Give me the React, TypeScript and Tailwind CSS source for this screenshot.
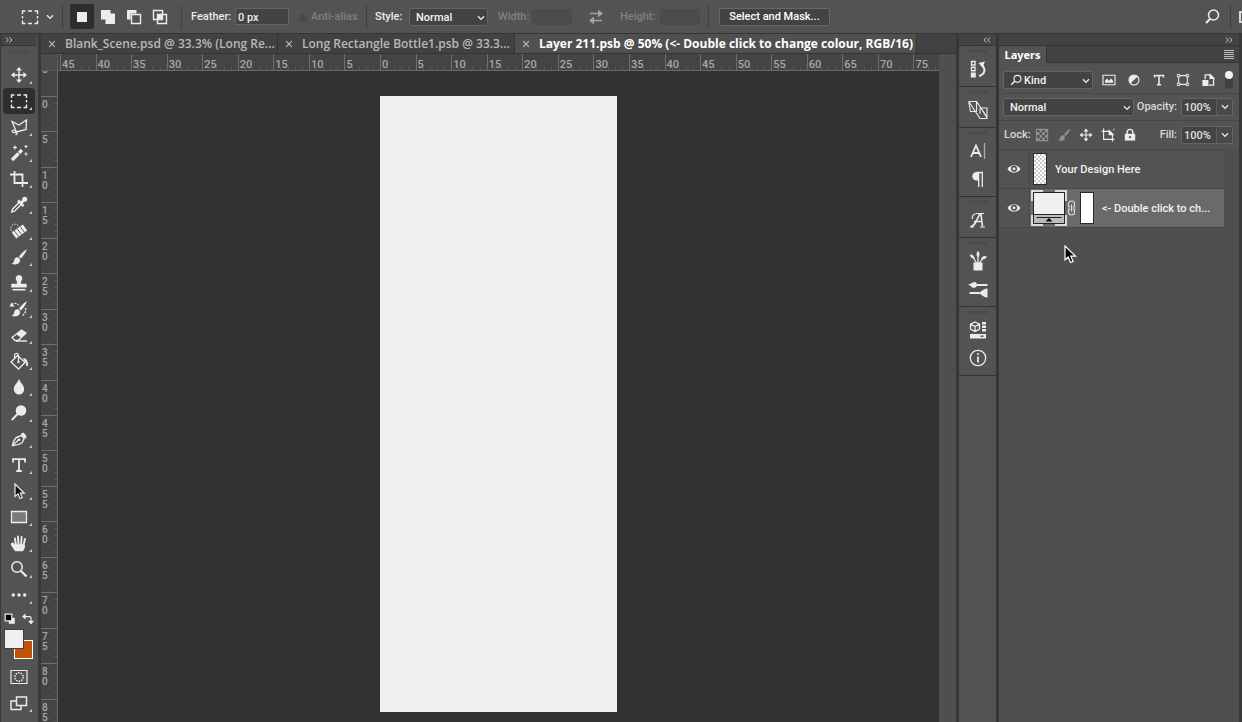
import type { ReactNode } from 'react'
import clsx from 'clsx'

type IconProps = { children: ReactNode; size?: number; className?: string }

/** 20x20 line drawing, stroked in the current text colour */
function Icon({ children, size = 20, className }: IconProps) {
  return (
    <svg
      width={size}
      height={size}
      viewBox="0 0 20 20"
      fill="none"
      stroke="currentColor"
      strokeWidth="1.4"
      className={clsx('shrink-0', className)}
      aria-hidden="true"
    >
      {children}
    </svg>
  )
}

function Chevron({ className }: { className?: string }) {
  return (
    <svg width="8" height="6" viewBox="0 0 8 6" fill="none" stroke="currentColor" strokeWidth="1.3" className={clsx('shrink-0', className)} aria-hidden="true">
      <path d="M1 1.2 4 4.4 7 1.2" />
    </svg>
  )
}

function DoubleChevron({ left }: { left?: boolean }) {
  return (
    <svg width="8" height="6" viewBox="0 0 8 6" fill="none" stroke="#c4c4c4" strokeWidth="1" className={left ? 'rotate-180' : ''} aria-hidden="true">
      <path d="M1 .5 3.4 3 1 5.5M4.6 .5 7 3 4.6 5.5" />
    </svg>
  )
}

function Grip() {
  return <div className="mx-auto h-1 w-5 bg-[repeating-linear-gradient(90deg,#484848_0_1px,#535353_1px_2px)]" />
}

/** small triangle that marks a tool with more tools behind it */
function FlyoutMark() {
  return <span className="absolute right-[3px] bottom-1 size-[3px] bg-[#c8c8c8] [clip-path:polygon(100%_0,100%_100%,0_100%)]" />
}

const movePath = (
  <>
    <path d="M10 4v12M4 10h12" />
    <path d="M10 2l3 3.6H7zM10 18l3-3.6H7zM2 10l3.6-3v6zM18 10l-3.6-3v6z" fill="currentColor" stroke="none" />
  </>
)

const marqueePath = <path d="M2.5 7V4h3M8 4h4M14.5 4h3v3M17.5 9v2.5M17.5 13.5v3h-3M12 16.5H8M5.5 16.5h-3v-3M2.5 11.5V9" />

const brushPath = (
  <>
    <path d="M17.8 2.2c-2 .8-6.3 5-7.8 7.4l1.8 1.8c2.2-1.8 5.6-6.8 6-9.2z" fill="currentColor" stroke="none" />
    <path d="M9.2 10.3c-2-.5-3.7.8-4 3-.2 1.8-1.2 3-2.7 3.4 3 1.6 7.4.8 8.4-2.2.5-1.6-.3-3.5-1.7-4.2z" fill="currentColor" stroke="none" />
  </>
)

const tools: { name: string; icon: ReactNode }[] = [
  { name: 'Move', icon: movePath },
  { name: 'Rectangular Marquee', icon: marqueePath },
  {
    name: 'Polygonal Lasso',
    icon: (
      <>
        <path d="M3 4.5l7 3.5L17.5 3l-.5 9.5-9.5 2.5z" strokeWidth="1.3" />
        <path d="M7.5 15c-1.5-2.3-4.5-2.3-4.5-.7s3.5 1.7 4.5.7zm0 0c1 1 .5 2.5-1 3" strokeWidth="1.2" />
      </>
    ),
  },
  {
    name: 'Magic Wand',
    icon: (
      <>
        <path d="M3 17l6.5-6.5" strokeWidth="3.4" />
        <path d="M10 10l3-3" strokeWidth="3.2" />
        <path d="M6 2.5v4M4 4.5h4M17 2v3M15.5 3.5h3M17 9.5v3M15.5 11h3" strokeWidth="1.2" />
      </>
    ),
  },
  { name: 'Crop', icon: <path d="M1 5.5h12.5V18M5.5 2v12H19" strokeWidth="1.8" /> },
  {
    name: 'Eyedropper',
    icon: (
      <>
        <path d="M10.5 7l-7 7.2-.8 2.8 2.8-.8L12.7 9" strokeWidth="1.4" />
        <path d="M9 5.5l5.5 5.5M11.5 8.5L15 5" strokeWidth="2.6" />
        <circle cx="15.7" cy="4.3" r="2.5" fill="currentColor" stroke="none" />
      </>
    ),
  },
  {
    name: 'Healing Brush',
    icon: (
      <>
        <circle cx="6" cy="7.5" r="4.3" strokeDasharray="1.5 1.2" strokeWidth="1" />
        <path d="M5 14.5L16 6.5" strokeWidth="7.2" />
        <path d="M5.5 10l4 5.5M8.5 8l4 5.5M11.5 6l4 5.5" stroke="#535353" strokeWidth=".9" />
      </>
    ),
  },
  { name: 'Brush', icon: brushPath },
  {
    name: 'Clone Stamp',
    icon: (
      <>
        <path d="M10 2a3.3 3.3 0 0 1 3 4.7c-.8 1.5-1.3 2.7-1 4h4.5c.8 0 1.3.5 1.3 1.3v2.5H2.2V12c0-.8.5-1.3 1.3-1.3H8c.3-1.3-.2-2.5-1-4A3.3 3.3 0 0 1 10 2z" fill="currentColor" stroke="none" />
        <path d="M3.5 16.7h13" strokeWidth="1.6" />
      </>
    ),
  },
  {
    name: 'History Brush',
    icon: (
      <>
        {brushPath}
        <path d="M2.5 5.5c2.5-1.7 5-1.5 7 .5M16.5 9c.7 3-.3 5.5-3 7.3" strokeDasharray="2 1.2" />
        <path d="M.5 7.5L2.5 3.5l3 4z" fill="currentColor" stroke="none" />
      </>
    ),
  },
  {
    name: 'Eraser',
    icon: (
      <>
        <path d="M3 12.5L12.5 5l4.5 3L9 15.5H6z" strokeWidth="1.3" />
        <path d="M7.5 9.5L12.5 5 17 8l-4.7 4.7z" fill="currentColor" stroke="none" />
        <path d="M7 16h11" />
      </>
    ),
  },
  {
    name: 'Paint Bucket',
    icon: (
      <>
        <path d="M8.5 4.5L16 11.5 9.5 18 2 11z" strokeWidth="1.3" />
        <path d="M9.5 11V4.5c0-3-4-3-4 0v3" strokeWidth="1.2" />
        <circle cx="9.5" cy="11" r="1.2" fill="currentColor" stroke="none" />
        <path d="M14 7c3 .3 5.3 2 5 8-1.5.5-2.3-.5-2-2 .2-1.5-.5-2.5-2-3.5z" fill="currentColor" stroke="none" />
      </>
    ),
  },
  { name: 'Blur', icon: <path d="M10 2c1.5 3.7 5.2 6.5 5.2 10.2a5.2 5.2 0 0 1-10.4 0C4.8 8.5 8.5 5.7 10 2z" fill="currentColor" stroke="none" /> },
  {
    name: 'Dodge',
    icon: (
      <>
        <circle cx="12" cy="7.5" r="5.3" fill="currentColor" stroke="none" />
        <path d="M9 10.5L2.8 17" strokeWidth="1.9" />
      </>
    ),
  },
  {
    name: 'Pen',
    icon: (
      <>
        <path d="M3.5 16.5c1-4.5 2-7.5 5-8.5l4-1.5 2.5 3-1.5 3.5c-1.5 2.5-5.5 3-10 3.5z" strokeWidth="1.4" />
        <path d="M3.5 16.5l6-5.5" strokeWidth="1.1" />
        <circle cx="10" cy="10.7" r="1.3" fill="currentColor" stroke="none" />
        <path d="M11.5 5l3-1.5 3 3.5-1 3z" fill="currentColor" stroke="none" />
      </>
    ),
  },
  { name: 'Type', icon: <path d="M4 7.5V4.2h12v3.3M10 4.5V16M7.3 16h5.4" strokeWidth="1.8" /> },
  { name: 'Path Selection', icon: <path d="M6 3v12.5l3-2.6 2 4.6 2.3-1-2-4.3h4z" fill="#111" strokeWidth="1.2" /> },
  { name: 'Rectangle', icon: <path d="M2.5 4.5h15v11h-15z" fill="#7b7b7b" strokeWidth="1.3" /> },
  {
    name: 'Hand',
    icon: (
      <>
        <path d="M6.5 17.5c-1.5-2.5-3.5-4.5-4-6-.2-1.3 1.3-1.6 2-.7L6.5 13h8.7c0 2-.8 3.5-1.7 4.5z" fill="currentColor" />
        <path d="M7 13L6 5.5M9.5 12.5L9 3.5M12 12.5l.6-8.5M14.3 13l1.7-7" strokeWidth="1.9" strokeLinecap="round" />
        <path d="M6.3 12h8.5v2H6.3z" fill="currentColor" />
      </>
    ),
  },
  {
    name: 'Zoom',
    icon: (
      <>
        <circle cx="8" cy="8" r="5.2" strokeWidth="1.5" />
        <path d="M12 12l5.5 5.5" strokeWidth="2.3" />
      </>
    ),
  },
  {
    name: 'Edit Toolbar',
    icon: (
      <g fill="currentColor" stroke="none">
        <circle cx="4.3" cy="10" r="1.7" />
        <circle cx="10" cy="10" r="1.7" />
        <circle cx="15.7" cy="10" r="1.7" />
      </g>
    ),
  },
]

const combineModes = [
  { name: 'New selection', icon: <path d="M5 5h10v10H5z" fill="currentColor" stroke="none" /> },
  { name: 'Add to selection', icon: <path d="M3 3h9.5v3.5H17V17H7.5v-4.5H3z" fill="currentColor" stroke="none" /> },
  {
    name: 'Subtract from selection',
    icon: (
      <>
        <path d="M3 3h9.5v3.5h-6v6H3z" fill="currentColor" stroke="none" />
        <path d="M7.5 7.5h9v9h-9z" />
      </>
    ),
  },
  {
    name: 'Intersect with selection',
    icon: (
      <>
        <path d="M3.5 3.5h9v9h-9zM7.5 7.5h9v9h-9z" />
        <path d="M8 8h4v4H8z" fill="currentColor" stroke="none" />
      </>
    ),
  },
]

const tabs = [
  { title: 'Blank_Scene.psd @ 33.3% (Long Re...' },
  { title: 'Long Rectangle Bottle1.psb @ 33.3...' },
  { title: 'Layer 211.psb @ 50% (<- Double click to change colour, RGB/16)', active: true },
]

const dockGroups: { name: string; icon: ReactNode }[][] = [
  [
    {
      name: 'History',
      icon: (
        <>
          <path d="M3.5 2.5H7V6H3.5zM3.5 8.3H7v3.5H3.5z" />
          <path d="M2.8 13.5h5v5h-5z" fill="currentColor" stroke="none" />
          <path d="M11 17c6-2 7-6.5 3-11" strokeWidth="2" />
          <path d="M10.5 4l6.5-1.5-2.5 6z" fill="currentColor" stroke="none" />
        </>
      ),
    },
  ],
  [
    {
      name: 'Timeline',
      icon: (
        <path d="M.7 1.5h7.8v10H2.5L.7 1.5 12 18.5h7V17L8.5 1.5M12 8h7v10.5M12 8v6M13.5 9l5 8" strokeWidth="1.1" />
      ),
    },
  ],
  [
    {
      name: 'Character',
      icon: (
        <>
          <path d="M3 16L8 4.5 13 16M5 12h6" strokeWidth="1.8" />
          <path d="M16.5 2v16" stroke="#aaa" />
        </>
      ),
    },
    {
      name: 'Paragraph',
      icon: (
        <>
          <path d="M11 3H8.5a4.2 4.2 0 0 0 0 8.5H11z" fill="currentColor" stroke="none" />
          <path d="M10.7 3v15M14.3 3.5V18M8 3.5h7" strokeWidth="1.3" />
        </>
      ),
    },
  ],
  [
    {
      name: 'Glyphs',
      icon: (
        <>
          <path d="M2.5 16.5c4 .5 6-6 9-12H13l1.5 12M6 11.5h8" strokeWidth="1.6" />
          <path d="M4.5 9C3.5 6 6 3.5 9 3.5h7M2 17h4M12 17h5" strokeWidth="1.2" />
        </>
      ),
    },
  ],
  [
    {
      name: 'Brush Presets',
      icon: (
        <>
          <path d="M5.5 11.5h9v8h-9z" fill="currentColor" stroke="none" />
          <path d="M8.5 12L5 6M10 12V4M11.5 12L15 7" strokeWidth="1.3" />
          <path d="M2 3.5c2-.3 4 1 4.8 4C4 8 2.3 6.5 2 3.5zM10 0c2 2 2 4.5 0 6-2-1.5-2-4 0-6zM19 5.5c-1.5 2.7-3.5 3.5-6 2.7 1-3 3.5-4 6-2.7z" fill="currentColor" stroke="none" />
        </>
      ),
    },
    {
      name: 'Brush Settings',
      icon: (
        <>
          <path d="M9 6h10.5M1.5 14h10" strokeWidth="1.9" />
          <path d="M0 5.5C3 5.5 4 3 6.5 3 8.5 3 9 4.5 9 6S8 8.8 6 8.8C3.5 8.8 3 6.5 0 5.5zM11 13.5c2.5-.5 4-4 8.5-4v9c-4.5 0-6-3.5-8.5-4z" fill="currentColor" stroke="none" />
        </>
      ),
    },
  ],
  [
    {
      name: 'Libraries',
      icon: (
        <>
          <path d="M7 2l4.5 2.2v5L7 11.5 2.5 9.2v-5zM2.5 4.2L7 6.5l4.5-2.3M7 6.5v5" strokeWidth="1.3" />
          <path d="M14 2h4v2.5h-4zM14 5.5h4V8h-4zM14 9h4v2.5h-4zM2 14h16v4.5H2z" fill="currentColor" stroke="none" />
          <path d="M12.5 16.2h3" stroke="#535353" />
        </>
      ),
    },
    {
      name: 'Info',
      icon: (
        <>
          <circle cx="10" cy="10" r="7.7" strokeWidth="1.3" />
          <path d="M10 8.5v6M10 5.3v1.8" strokeWidth="1.7" />
        </>
      ),
    },
  ],
]

const layerFilters = [
  {
    name: 'Pixel layers',
    icon: (
      <>
        <path d="M2.5 4h15v12h-15z" />
        <path d="M5 13.5V11l2.5-3L10 11l2.5-3L15 11v2.5z" fill="currentColor" stroke="none" />
      </>
    ),
  },
  {
    name: 'Adjustment layers',
    icon: (
      <>
        <circle cx="10" cy="10" r="6.2" />
        <path d="M5.5 14.5A6.2 6.2 0 0 1 14.5 5.5z" fill="currentColor" stroke="none" />
      </>
    ),
  },
  { name: 'Type layers', icon: <path d="M4.5 7V4.3h11V7M10 4.5V16M7.5 16h5" strokeWidth="2" /> },
  {
    name: 'Shape layers',
    icon: (
      <>
        <path d="M4.5 4.5h11v11h-11z" />
        <path d="M3 3h3v3H3zM14 3h3v3h-3zM3 14h3v3H3zM14 14h3v3h-3z" fill="#535353" strokeWidth="1.2" />
      </>
    ),
  },
  {
    name: 'Smart objects',
    icon: (
      <>
        <path d="M6.5 9V3.5H13l4 4v9h-6" strokeWidth="1.6" />
        <path d="M12.5 3.5V8H17z" fill="currentColor" />
        <path d="M3 10h7.5v7.5H3z" fill="currentColor" stroke="none" />
      </>
    ),
  },
]

const locks = [
  {
    name: 'Lock transparent pixels',
    muted: true,
    icon: (
      <>
        <path d="M3 3h14v14H3z" />
        <path d="M7 3h3v3.5H7zM13.5 3H17v3.5h-3.5zM3 6.5h4V10H3zM10 6.5h3.5V10H10zM7 10h3v3.5H7zM13.5 10H17v3.5h-3.5zM3 13.5h4V17H3zM10 13.5h3.5V17H10z" fill="currentColor" stroke="none" />
      </>
    ),
  },
  { name: 'Lock image pixels', muted: true, icon: brushPath },
  { name: 'Lock position', icon: movePath },
  {
    name: 'Prevent auto-nesting',
    icon: (
      <>
        <path d="M4.5 2v13.5H18M2 5.5h10L15.5 9v9" strokeWidth="1.4" />
        <path d="M11.5 4.5v5h5z" fill="currentColor" />
        <path d="M16.5 4l2-2" strokeDasharray="1.5 1" />
      </>
    ),
  },
  {
    name: 'Lock all',
    icon: (
      <>
        <path d="M3.5 8.5h13V17h-13z" fill="currentColor" stroke="none" />
        <path d="M6.5 9V6.5a3.5 3.5 0 0 1 7 0V9" strokeWidth="1.8" />
        <circle cx="10" cy="12.7" r="1.4" fill="#535353" stroke="none" />
      </>
    ),
  },
]

const horizontalMarks = [45, 40, 35, 30, 25, 20, 15, 10, 5, 0, 5, 10, 15, 20, 25, 30, 35, 40, 45, 50, 55, 60, 65, 70, 75]
const verticalMarks = Array.from({ length: 18 }, (_, i) => i * 5)

function Divider() {
  return <div className="h-6 w-px shrink-0 bg-[#414141]" />
}

type SelectProps = { label: string; value: string; className?: string; padding?: string; children?: ReactNode }

function Select({ label, value, className, padding = 'pl-1.5', children }: SelectProps) {
  return (
    <div className={clsx('relative h-[18px] shrink-0 rounded-xs border border-[#646464] bg-[#434343]', className)}>
      <select aria-label={label} className={clsx('block h-4 w-full appearance-none pt-px pr-4 leading-4 text-[#f2f2f2] outline-none', padding)}>
        <option>{value}</option>
      </select>
      {children}
      <Chevron className="pointer-events-none absolute top-1.5 right-0.5" />
    </div>
  )
}

function PercentField({ id, label }: { id: string; label: string }) {
  return (
    <div className="flex items-center gap-1">
      <label htmlFor={id} className="pt-px text-[#d8d8d8]">{label}</label>
      <div className="flex h-[18px] w-13 rounded-xs border border-[#646464] bg-[#434343]">
        <input id={id} defaultValue="100%" className="min-w-0 flex-1 pt-px pl-0.5 leading-4 text-[#e0e0e0] outline-none" />
        <button aria-label={`${label} slider`} className="flex w-4 items-center justify-center border-l border-[#5c5c5c] bg-[#4a4a4a]">
          <Chevron />
        </button>
      </div>
    </div>
  )
}

function OptionsBar() {
  return (
    <header className="flex h-[34px] shrink-0 items-center border-b border-[#343434] pl-5">
      <button aria-label="Tool preset" className="flex w-[42px] items-center gap-1.5">
        <Icon>{marqueePath}</Icon>
        <Chevron />
      </button>
      <Divider />
      <div className="flex gap-0.5 pr-[9px] pl-[7px]">
        {combineModes.map((m, i) => (
          <button key={m.name} aria-label={m.name} className={clsx('flex h-[25px] w-6 items-center justify-center rounded-xs', i === 0 && 'bg-[#2e2e2e]')}>
            <Icon>{m.icon}</Icon>
          </button>
        ))}
      </div>
      <Divider />
      <label htmlFor="feather" className="ml-[9px] w-11 pt-0.5 whitespace-nowrap">Feather:</label>
      <input id="feather" defaultValue="0 px" className="h-[17px] w-[54px] border border-[#646464] bg-[#434343] pt-px pl-0.5 outline-none" />
      <label className="ml-2.5 flex w-[67px] items-center gap-1 pt-0.5 whitespace-nowrap text-[#808080]">
        <input type="checkbox" disabled className="size-2 appearance-none rounded-full bg-[#4a4a4a]" />
        Anti-alias
      </label>
      <Divider />
      <span className="w-[42px] pt-0.5 pl-2">Style:</span>
      <Select label="Style" value="Normal" className="w-[79px]" />
      <label htmlFor="width" className="ml-2.5 w-[34px] pt-0.5 text-[#808080]">Width:</label>
      <input id="width" disabled className="h-4 w-10 bg-[#4b4b4b]" />
      <button aria-label="Swap width and height" disabled className="mx-3.5 text-[#a0a0a0]">
        <Icon>
          <path d="M4 6.5h9M7 13.5h9" strokeWidth="1.5" />
          <path d="M12 2.5l5 4-5 4zM8 9.5l-5 4 5 4z" fill="currentColor" stroke="none" />
        </Icon>
      </button>
      <label htmlFor="height" className="w-10 pt-0.5 text-[#808080]">Height:</label>
      <input id="height" disabled className="mr-2 h-4 w-10 bg-[#4b4b4b]" />
      <Divider />
      <button className="ml-2.5 h-[18px] w-[111px] shrink-0 rounded-xs border border-[#686868] bg-[#434343] leading-4 whitespace-nowrap text-white">
        Select and Mask...
      </button>
      <div className="ml-auto flex items-center">
        <button aria-label="Search" className="mr-2">
          <Icon>
            <circle cx="11.5" cy="8" r="5" strokeWidth="1.5" />
            <path d="M8 12L4 16" strokeWidth="2" />
          </Icon>
        </button>
        <Divider />
        <button aria-label="Workspace" className="ml-2 h-3 w-[3px] border-2 border-r-0 border-[#d8d8d8]" />
      </div>
    </header>
  )
}

function Toolbar() {
  return (
    <nav aria-label="Tools" className="flex w-[41px] shrink-0 flex-col border-r-3 border-l border-[#383838] pr-px">
      <div className="flex h-3 shrink-0 items-center border-b border-[#343434] bg-[#434343] pl-1">
        <DoubleChevron />
      </div>
      <div className="h-4 shrink-0 pt-1"><Grip /></div>
      {tools.map(tool => (
        <button
          key={tool.name}
          aria-label={tool.name}
          className={clsx('relative mx-0.5 flex h-[26px] shrink-0 items-center justify-center rounded-sm', tool.name === 'Rectangular Marquee' && 'bg-[#2e2e2e]')}
        >
          <Icon>{tool.icon}</Icon>
          <FlyoutMark />
        </button>
      ))}
      <div className="flex h-[21px] shrink-0 items-center gap-1.5 pl-[3px]">
        <button aria-label="Default colours">
          <Icon size={12}>
            <path d="M8 8h10v10H8z" fill="currentColor" stroke="none" />
            <path d="M2 2h11v11H2z" fill="#000" strokeWidth="2" />
          </Icon>
        </button>
        <button aria-label="Switch colours">
          <Icon size={12}>
            <path d="M5 6h8c1.5 0 2 .5 2 2v6" strokeWidth="2" />
            <path d="M6 1v10L0 6zM10 13h10l-5 6z" fill="currentColor" stroke="none" />
          </Icon>
        </button>
      </div>
      {/* foreground swatch overlaps the background one */}
      <div className="relative ml-[3px] h-[30px] w-[29px] shrink-0">
        <button aria-label="Background colour" className="absolute right-0 bottom-0 size-[19px] border border-white bg-[#bf5206]" />
        <button aria-label="Foreground colour" className="absolute top-0 left-0 size-5 border border-[#404040] bg-[#f0f0f0]" />
      </div>
      <button aria-label="Quick mask" className="mt-[5px] flex h-[26px] shrink-0 items-center justify-center">
        <Icon>
          <path d="M2 3.5h16v13H2z" strokeWidth="1.2" />
          <circle cx="10" cy="10" r="4.2" strokeDasharray="1.6 1" />
        </Icon>
      </button>
      <button aria-label="Screen mode" className="relative mx-0.5 flex h-[26px] shrink-0 items-center justify-center">
        <Icon>
          <path d="M2 8h10v8.5H2z" strokeWidth="1.5" />
          <path d="M7.5 4h10v8.5h-10z" fill="#535353" strokeWidth="1.5" />
        </Icon>
        <FlyoutMark />
      </button>
    </nav>
  )
}

function DocumentTabs() {
  return (
    <div className="flex h-5 shrink-0 border-b border-[#343434] bg-[#424242] font-['Open_Sans',sans-serif] text-[12px]">
      {tabs.map(tab => (
        <div
          key={tab.title}
          className={clsx(
            'flex shrink-0 items-center border-r border-[#343434] pl-[7px] whitespace-nowrap',
            tab.active ? 'w-[402px] bg-[#505050] font-bold text-white' : 'w-[237px] font-semibold text-[#b8b8b8]'
          )}
        >
          <button aria-label={`Close ${tab.title}`} className="mr-[9px] text-[#c0c0c0]">
            <svg width="8" height="8" viewBox="0 0 8 8" stroke="currentColor" strokeWidth="1.1" aria-hidden="true">
              <path d="M1.2 1.2l5.6 5.6M6.8 1.2L1.2 6.8" />
            </svg>
          </button>
          <button>{tab.title}</button>
        </div>
      ))}
    </div>
  )
}

function HorizontalRuler() {
  return (
    <div className="flex h-[17px] shrink-0 overflow-hidden bg-[#444] text-[#a8a8a8]">
      <div className="w-[17px] shrink-0 border-r border-b border-dotted border-[#6a6a6a] bg-[#4c4c4c]" />
      <div className="min-w-0 flex-1 overflow-hidden border-b border-[#6a6a6a] pl-0.5">
        <div className="grid h-4 w-[889px] grid-cols-[repeat(25,minmax(0,1fr))]">
          {horizontalMarks.map((mark, i) => (
            <div key={i} className="relative h-4 border-l border-[#6e6e6e] pl-px leading-[22px]">
              {mark}
              <div className="absolute inset-x-0 bottom-0 flex h-[3px] justify-evenly">
                {[1, 2, 3, 4].map(n => <i key={n} className="w-px bg-[#585858]" />)}
              </div>
            </div>
          ))}
        </div>
      </div>
      <div className="w-[17px] shrink-0 bg-[#4f4f4f]" />
    </div>
  )
}

function VerticalRuler() {
  return (
    <div className="w-[17px] shrink-0 overflow-hidden border-r border-[#6a6a6a] bg-[#444] text-[10px] leading-[10px] text-[#a8a8a8]">
      {/* the mark above zero is scrolled almost out of view */}
      <div className="flex h-[25px] items-start pl-px">
        <span className="-mt-1.5">5</span>
      </div>
      <div className="grid h-[638px] grid-rows-[repeat(18,minmax(0,1fr))]">
        {verticalMarks.map(mark => (
          <div key={mark} className="relative flex flex-col border-t border-[#6e6e6e] pt-[3px] pl-px">
            {String(mark).split('').map((digit, i) => <span key={i}>{digit}</span>)}
            <div className="absolute inset-y-0 right-0 flex w-[3px] flex-col justify-evenly">
              {[1, 2, 3, 4].map(n => <i key={n} className="h-px bg-[#585858]" />)}
            </div>
          </div>
        ))}
      </div>
    </div>
  )
}

function Dock() {
  return (
    <aside aria-label="Collapsed panels" className="w-10 shrink-0 border-r-2 border-l border-[#343434]">
      <div className="flex h-3 items-center justify-center border-b border-[#343434] bg-[#434343] pl-[18px]">
        <DoubleChevron left />
      </div>
      {dockGroups.map((group, i) => (
        <div key={i} className="flex flex-col border-b border-[#343434] pb-[3px]">
          <div className="h-[9px] pt-[3px]"><Grip /></div>
          {group.map(item => (
            <button key={item.name} aria-label={item.name} className="flex h-7 items-center justify-center pl-px">
              <Icon>{item.icon}</Icon>
            </button>
          ))}
        </div>
      ))}
    </aside>
  )
}

function Eye() {
  return (
    <svg width="14" height="10" viewBox="0 0 14 10" aria-hidden="true">
      <path d="M.5 5C3.5 0 10.5 0 13.5 5 10.5 10 3.5 10 .5 5z" fill="#e8e8e8" />
      <circle cx="7" cy="4.8" r="3" fill="#4a4a4a" />
      <circle cx="7" cy="4.8" r="1.5" fill="#e8e8e8" />
    </svg>
  )
}

function LayersPanel() {
  return (
    <aside aria-label="Layers panel" className="relative flex w-[244px] shrink-0 flex-col border-r-3 border-l border-[#383838] bg-[#4f4f4f]">
      <div className="flex h-3 shrink-0 items-center justify-end border-b border-[#343434] bg-[#434343] pr-1.5">
        <DoubleChevron />
      </div>
      <div className="flex h-[17px] shrink-0 bg-[#434343]">
        <button className="w-12 border-r border-[#343434] bg-[#535353] font-['Noto_Sans',sans-serif] leading-4 font-bold text-white">Layers</button>
        <div className="flex flex-1 items-center justify-end border-b border-[#343434] pr-[5px]">
          <button aria-label="Panel menu" className="h-[9px] w-2.5 bg-[repeating-linear-gradient(180deg,#bdbdbd_0_1px,#434343_1px_2px)]" />
        </div>
      </div>
      <div className="flex h-[31px] shrink-0 items-center border-b border-[#474747] bg-[#535353] pt-1 pl-1">
        <Select label="Filter by" value="Kind" className="w-[90px]" padding="pl-5">
          <Icon size={12} className="pointer-events-none absolute top-0.5 left-1.5">
            <circle cx="12.5" cy="8" r="5.8" strokeWidth="2" />
            <path d="M8 12l-6 6" strokeWidth="2.6" />
          </Icon>
        </Select>
        <div className="flex flex-1 items-center justify-between pr-1.5 pl-2">
          {layerFilters.map(f => (
            <button key={f.name} aria-label={f.name}><Icon size={16}>{f.icon}</Icon></button>
          ))}
          <button aria-label="Toggle filtering" className="flex h-[18px] w-2 items-start rounded-full bg-[#404040]">
            <span className="size-2 rounded-full bg-[#f2f2f2]" />
          </button>
        </div>
      </div>
      <div className="flex h-[27px] shrink-0 items-center justify-between border-b border-[#474747] bg-[#535353] pr-1.5 pl-1">
        <Select label="Blend mode" value="Normal" className="w-[131px]" />
        <PercentField id="opacity" label="Opacity:" />
      </div>
      <div className="flex h-7 shrink-0 items-center bg-[#535353] pr-1.5 pl-[5px]">
        <span className="w-[30px] pt-px text-[#d8d8d8]">Lock:</span>
        <div className="flex gap-1.5">
          {locks.map(lock => (
            <button key={lock.name} aria-label={lock.name} className={clsx(lock.muted && 'text-[#8f8f8f]')}>
              <Icon size={16}>{lock.icon}</Icon>
            </button>
          ))}
        </div>
        <div className="ml-auto"><PercentField id="fill" label="Fill:" /></div>
      </div>
      <ul className="mr-[15px] border-t border-[#484848] text-[#f2f2f2]">
        <li className="flex h-[39px] items-center border-b border-[#484848] bg-[#535353]">
          <button aria-label="Toggle visibility of Your Design Here" className="flex h-full w-[31px] items-center justify-center border-r border-[#484848]"><Eye /></button>
          <div className="ml-[3px] h-8 w-[14px] border border-[#2a2a2a] bg-[conic-gradient(#c8c8c8_25%,#fff_0_50%,#c8c8c8_0_75%,#fff_0)] bg-[length:4px_4px]" />
          <span className="ml-2 pt-[3px]">Your Design Here</span>
        </li>
        <li className="flex h-[39px] items-center border-b border-[#484848] bg-[#6a6a6a]">
          <button aria-label="Toggle visibility of colour fill" className="flex h-full w-[31px] items-center justify-center border-r border-[#484848] bg-[#535353]"><Eye /></button>
          <svg width="36" height="36" viewBox="0 0 36 36" className="ml-px shrink-0" aria-hidden="true">
            <path d="M1 11V1h11M24 1h11v10M35 25v10H24M12 35H1V25" fill="none" stroke="#fff" strokeWidth="1.5" />
            <path d="M2.5 2.5h31v31h-31z" fill="#f0f0f0" stroke="#222" />
            <path d="M3 24.5h30V33H3z" fill="#bcbcbc" />
            <path d="M3 24.5h30M5.5 27.5h25" stroke="#222" />
            <path d="M18 28l3.5 3.5h-7z" fill="#000" />
          </svg>
          <svg width="9" height="16" viewBox="0 0 9 16" fill="none" stroke="#ddd" strokeWidth="1.2" className="shrink-0" aria-hidden="true">
            <path d="M1.5 7V4a3 3 0 0 1 6 0v3H5.8M1.5 9v3a3 3 0 0 0 6 0V9H5.8M1.5 7h1.7M1.5 9h1.7M4.5 4.5v7" />
          </svg>
          <div className="ml-1 h-8 w-[14px] shrink-0 border border-[#2a2a2a] bg-white" />
          <span className="ml-2 truncate pt-[3px]">&lt;- Double click to ch...</span>
        </li>
      </ul>
      {/* mouse pointer */}
      <svg width="13" height="19" viewBox="0 0 13 19" className="pointer-events-none absolute top-[211px] left-[65px]" aria-hidden="true">
        <path d="M1 1v14l3.2-2.9 2.3 5.4 2.6-1.1-2.3-5.2h4.7z" fill="#000" stroke="#fff" strokeWidth="1.2" />
      </svg>
    </aside>
  )
}

export default function App() {
  return (
    <div className="flex h-screen flex-col overflow-hidden bg-[#535353] font-[Roboto,sans-serif] text-[11px] font-medium text-[#ececec]">
      <OptionsBar />
      <div className="flex min-h-0 flex-1">
        <Toolbar />
        <main className="flex min-w-0 flex-1 flex-col border-r-2 border-[#383838]">
          <DocumentTabs />
          <HorizontalRuler />
          <div className="flex min-h-0 flex-1">
            <VerticalRuler />
            <div className="flex min-w-0 flex-1 justify-center overflow-hidden bg-[#313131] pt-[25px]">
              <div className="h-[616px] w-[237px] shrink-0 bg-[#f0f0f0]" />
            </div>
            <div className="w-[17px] shrink-0 bg-[#4f4f4f]" />
          </div>
        </main>
        <Dock />
        <LayersPanel />
      </div>
    </div>
  )
}
